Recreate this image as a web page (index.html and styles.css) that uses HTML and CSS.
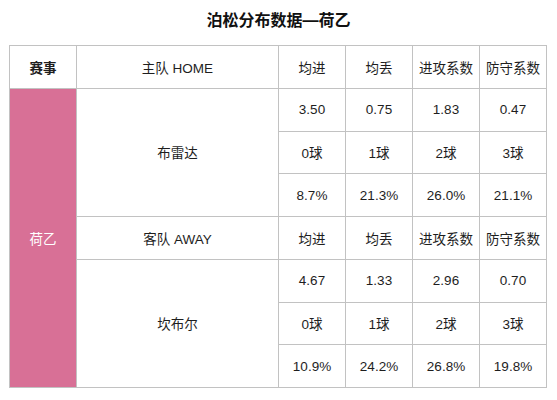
FILE: index.html
```html
<!DOCTYPE html>
<html lang="zh">
<head>
<meta charset="utf-8">
<link rel="stylesheet" href="styles.css">
</head>
<body>
<h1 class="title">泊松分布数据—荷乙</h1>
<table class="poisson">
  <colgroup>
    <col class="c-league"><col class="c-team"><col class="c-val"><col class="c-val"><col class="c-val"><col class="c-val">
  </colgroup>
  <tr>
    <th class="head-league">赛事</th>
    <td>主队 HOME</td>
    <td>均进</td><td>均丢</td><td>进攻系数</td><td>防守系数</td>
  </tr>
  <tr>
    <td class="league" rowspan="7">荷乙</td>
    <td rowspan="3">布雷达</td>
    <td>3.50</td><td>0.75</td><td>1.83</td><td>0.47</td>
  </tr>
  <tr><td>0球</td><td>1球</td><td>2球</td><td>3球</td></tr>
  <tr><td>8.7%</td><td>21.3%</td><td>26.0%</td><td>21.1%</td></tr>
  <tr>
    <td>客队 AWAY</td>
    <td>均进</td><td>均丢</td><td>进攻系数</td><td>防守系数</td>
  </tr>
  <tr>
    <td rowspan="3">坎布尔</td>
    <td>4.67</td><td>1.33</td><td>2.96</td><td>0.70</td>
  </tr>
  <tr><td>0球</td><td>1球</td><td>2球</td><td>3球</td></tr>
  <tr><td>10.9%</td><td>24.2%</td><td>26.8%</td><td>19.8%</td></tr>
</table>
</body>
</html>
```
FILE: styles.css
```css
html, body {
  margin: 0;
  padding: 0;
  background: #ffffff;
}
body {
  font-family: "Liberation Sans", "Noto Sans CJK SC", sans-serif;
  color: #1e1e1e;
  width: 557px;
}
.title {
  margin: 0;
  height: 45px;
  line-height: 41px;
  font-size: 16px;
  font-weight: bold;
  text-align: center;
  color: #111111;
}
.poisson {
  margin-left: 9px;
  width: 537px;
  border-collapse: collapse;
  table-layout: fixed;
  font-size: 13.5px;
}
.c-league { width: 67px; }
.c-team { width: 202px; }
.c-val { width: 67px; }
.poisson tr {
  height: 42.75px;
}
.poisson td, .poisson th {
  border: 1px solid #c2c2c2;
  padding: 0;
  text-align: center;
  vertical-align: middle;
  font-weight: normal;
}
.poisson .head-league {
  font-weight: bold;
}
.poisson .league {
  background: #d87096;
  color: #ffffff;
}
```
